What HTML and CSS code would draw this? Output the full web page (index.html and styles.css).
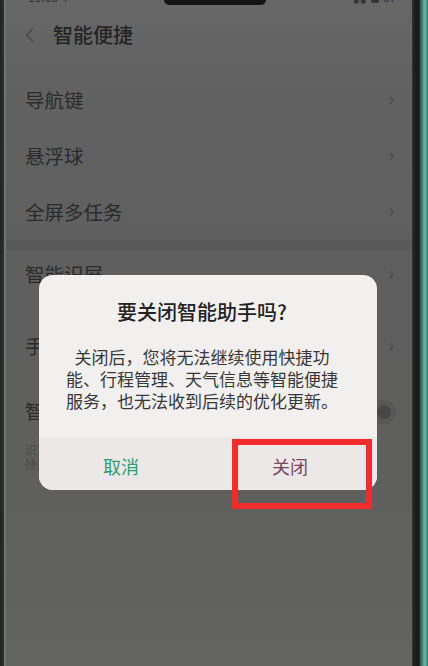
FILE: index.html
```html
<!DOCTYPE html>
<html lang="zh-CN">
<head>
<meta charset="utf-8">
<title>智能便捷</title>
<link rel="stylesheet" href="styles.css">
</head>
<body>
<div class="phone">
  <div class="bezel-left"></div>
  <div class="screen">
    <div class="status">
      <span class="status-time">10:08 ✈</span>
      <div class="notch"></div>
      <span class="status-icons">▮▮ ◼ 67</span>
    </div>
    <div class="header">
      <svg class="back" width="9" height="14" viewBox="0 0 9 14"><polyline points="7.5,1 1.5,7 7.5,13" fill="none" stroke="#46524e" stroke-width="1.8" stroke-linecap="round" stroke-linejoin="round"/></svg>
      <h1 class="title">智能便捷</h1>
    </div>
    <div class="group group-first">
      <div class="item"><span class="item-text">导航键</span><svg class="chev" width="5" height="9" viewBox="0 0 5 9"><polyline points="1,1 4,4.5 1,8" fill="none" stroke="#4b4b4b" stroke-width="1.2"/></svg></div>
      <div class="item"><span class="item-text">悬浮球</span><svg class="chev" width="5" height="9" viewBox="0 0 5 9"><polyline points="1,1 4,4.5 1,8" fill="none" stroke="#4b4b4b" stroke-width="1.2"/></svg></div>
      <div class="item"><span class="item-text">全屏多任务</span><svg class="chev" width="5" height="9" viewBox="0 0 5 9"><polyline points="1,1 4,4.5 1,8" fill="none" stroke="#4b4b4b" stroke-width="1.2"/></svg></div>
    </div>
    <div class="band"></div>
    <div class="group">
      <div class="item item-a"><span class="item-text">智能识屏</span><svg class="chev" width="5" height="9" viewBox="0 0 5 9"><polyline points="1,1 4,4.5 1,8" fill="none" stroke="#4b4b4b" stroke-width="1.2"/></svg></div>
      <div class="item item-b"><span class="item-text">手势体感</span><svg class="chev" width="5" height="9" viewBox="0 0 5 9"><polyline points="1,1 4,4.5 1,8" fill="none" stroke="#4b4b4b" stroke-width="1.2"/></svg></div>
      <div class="item item-c">
        <div class="item-col">
          <span class="item-text">智能助手</span>
          <span class="item-desc">识别场景，提供快捷功能、行程管理、天气信息等智能便捷服务</span>
        </div>
        <div class="toggle"><div class="knob"></div></div>
      </div>
    </div>
    <div class="rest"></div>

    <div class="dialog">
      <div class="dialog-head">
        <div class="dialog-title">要关闭智能助手吗?</div>
        <div class="dialog-body">关闭后，您将无法继续使用快捷功能、行程管理、天气信息等智能便捷服务，也无法收到后续的优化更新。</div>
      </div>
      <div class="dialog-actions">
        <div class="btn btn-cancel">取消</div>
        <div class="btn btn-close">关闭</div>
      </div>
    </div>
    <div class="mark"></div>
  </div>
  <div class="bezel-right"></div>
</div>
</body>
</html>
```

FILE: styles.css
```css
html, body {
  margin: 0;
  padding: 0;
}
body {
  width: 428px;
  height: 666px;
  overflow: hidden;
  background: #1f2523;
  font-family: "Noto Sans CJK SC", "Noto Sans", sans-serif;
}
.phone {
  display: flex;
  width: 428px;
  height: 666px;
}
.bezel-left {
  width: 4px;
  background: linear-gradient(to right, #1e2422, #2c3331);
}
.screen {
  position: relative;
  width: 406px;
  border-left: 2px solid #6f7472;
  background: linear-gradient(to bottom, #676767 0, #626262 70px, #5f5f5f 250px, #5f5f5e 500px, #636361 666px);
  display: flex;
  flex-direction: column;
  overflow: hidden;
}
.bezel-right {
  width: 16px;
  background: linear-gradient(to right, #2f3634 0, #1b2220 2px, #141a18 7px, #1f4d43 8px, #4f9986 11px, #6fb3a2 13px, #3a7c6c 16px);
}

/* status bar */
.status {
  height: 12px;
  display: flex;
  align-items: flex-start;
  justify-content: space-between;
  padding: 0 16px 0 22px;
  overflow: hidden;
}
.status-time, .status-icons {
  font-size: 12px;
  line-height: 12px;
  color: #333;
  margin-top: -9px;
  width: 70px;
}
.status-icons {
  text-align: right;
}
.notch {
  width: 102px;
  height: 5px;
  background: #151515;
  border-radius: 0 0 6px 6px;
  margin-left: 6px;
}

/* header */
.header {
  height: 46px;
  display: flex;
  align-items: center;
  padding-left: 19px;
  gap: 19px;
}
.back {
  display: block;
}
.title {
  margin: 0;
  font-size: 20px;
  line-height: 26px;
  font-weight: 500;
  color: #242424;
}

/* list */
.group-first {
  padding-top: 14px;
}
.item {
  display: flex;
  align-items: center;
  justify-content: space-between;
  height: 56px;
  padding: 0 18px 0 19px;
}
.item-text {
  font-size: 19.5px;
  line-height: 22px;
  color: #2a2a2a;
}
.chev {
  display: block;
}
.band {
  height: 10px;
  background: #595959;
}
.item-a {
  height: 60px;
  align-items: flex-start;
  padding-top: 13px;
  box-sizing: border-box;
}
.item-a .chev {
  margin-top: 7px;
}
.item-b {
  height: 72px;
}
.item-c {
  height: auto;
  align-items: flex-start;
  padding-top: 18px;
}
.item-col {
  display: flex;
  flex-direction: column;
  width: 300px;
}
.item-desc {
  margin-top: 21px;
  font-size: 12px;
  line-height: 14px;
  color: #4c4c4c;
}
.toggle {
  width: 40px;
  height: 24px;
  border-radius: 12px;
  background: #575757;
  margin-top: 0;
  margin-right: -2px;
  display: flex;
  justify-content: flex-end;
  align-items: center;
  padding: 0 2px;
  box-sizing: border-box;
}
.knob {
  width: 14px;
  height: 14px;
  border-radius: 50%;
  background: #474747;
  margin-right: 3px;
}
.rest {
  flex: 1;
}

/* dialog */
.dialog {
  position: absolute;
  left: 33px;
  top: 275px;
  width: 338px;
  height: 215px;
  border-radius: 14px;
  background: #f2efef;
  display: flex;
  flex-direction: column;
  overflow: hidden;
}
.dialog-head {
  padding-right: 12px;
}
.dialog-title {
  padding-top: 24px;
  font-size: 20px;
  line-height: 26px;
  font-weight: 500;
  color: #232323;
  text-align: center;
}
.dialog-body {
  width: 274px;
  margin: 21px auto 0;
  font-size: 17px;
  line-height: 22px;
  color: #383838;
  text-align: center;
}
.dialog-actions {
  margin-top: auto;
  height: 53px;
  padding-top: 4px;
  box-sizing: border-box;
  display: flex;
  background: #ece8e8;
}
.btn {
  flex: 1;
  display: flex;
  align-items: center;
  justify-content: center;
  font-size: 18px;
  line-height: 22px;
}
.btn-cancel {
  color: #2f9e6e;
  padding-right: 5px;
}
.btn-close {
  color: #7b4662;
  padding-right: 5px;
}

/* annotation */
.mark {
  position: absolute;
  left: 226px;
  top: 439px;
  width: 140px;
  height: 70px;
  box-sizing: border-box;
  border: 6px solid #f42b2b;
}
```
